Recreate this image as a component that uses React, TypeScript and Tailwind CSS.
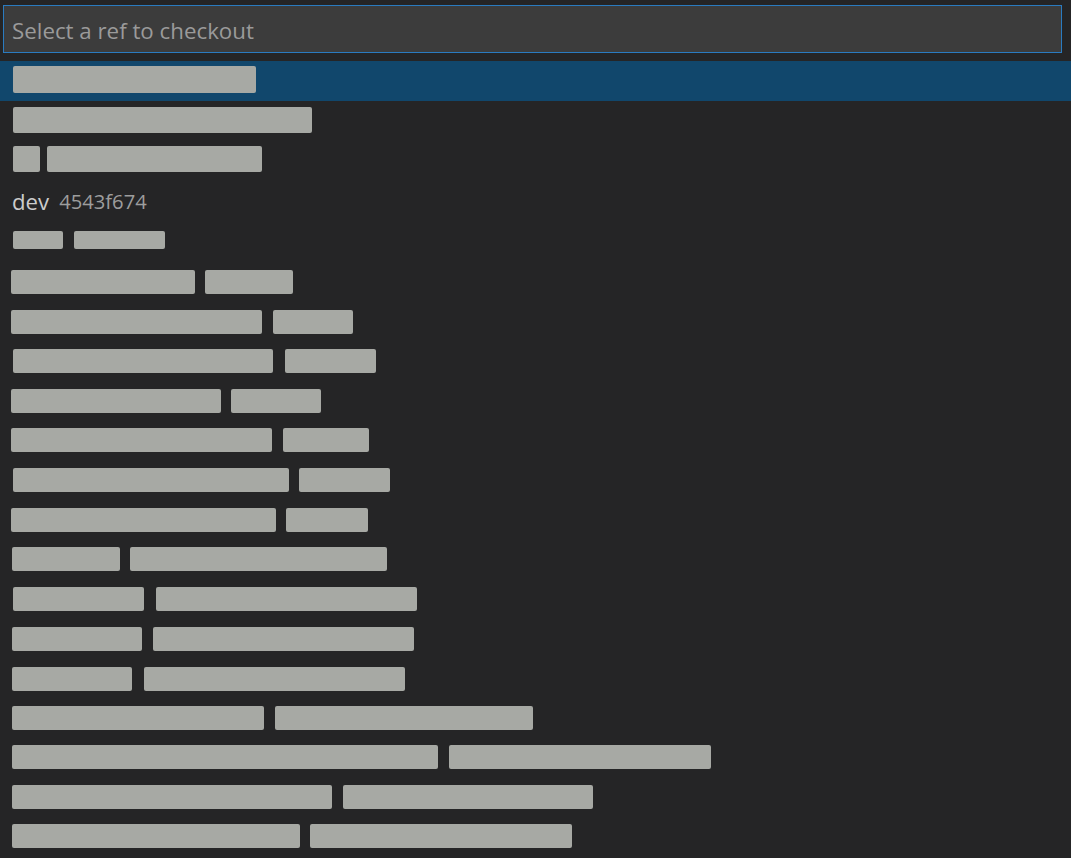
import React from "react";

type Bar = [number, number];
type Row = { top: number; h: number; bars: Bar[] };

const rows: Row[] = [
  { top: 5, h: 27, bars: [[13, 256]] },
  { top: 6.4, h: 26, bars: [[13, 312]] },
  { top: 5.8, h: 26, bars: [[13, 40], [47, 262]] },
  { top: 0, h: 0, bars: [] },
  { top: 11.6, h: 18, bars: [[13, 63], [74, 165]] },
  { top: 11, h: 24, bars: [[11, 195], [205, 293]] },
  { top: 11.4, h: 24, bars: [[11, 262], [273, 353]] },
  { top: 10.8, h: 24, bars: [[13, 273], [285, 376]] },
  { top: 11.2, h: 24, bars: [[11, 221], [231, 321]] },
  { top: 10.6, h: 24, bars: [[11, 272], [283, 369]] },
  { top: 11, h: 24, bars: [[13, 289], [299, 390]] },
  { top: 11.4, h: 24, bars: [[11, 276], [286, 368]] },
  { top: 10.8, h: 24, bars: [[12, 120], [130, 387]] },
  { top: 11.2, h: 24, bars: [[13, 144], [156, 417]] },
  { top: 11.6, h: 24, bars: [[12, 142], [153, 414]] },
  { top: 12, h: 24, bars: [[12, 132], [144, 405]] },
  { top: 11.4, h: 24, bars: [[12, 264], [275, 533]] },
  { top: 10.8, h: 24, bars: [[12, 438], [449, 711]] },
  { top: 11.2, h: 24, bars: [[12, 332], [343, 593]] },
  { top: 10.6, h: 24, bars: [[12, 300], [310, 572]] },
];

function Bars({ row }: { row: Row }) {
  let x = 0;
  return (
    <div className="flex items-start">
      {row.bars.map(([a, b], i) => {
        const ml = a - x;
        x = b;
        return (
          <div
            key={i}
            className="rounded-[2px] bg-[#a7a9a4]"
            style={{ marginLeft: ml, width: b - a, height: row.h, marginTop: row.top }}
          />
        );
      })}
    </div>
  );
}

export default function App() {
  return (
    <div
      className="w-[1071px] h-[858px] overflow-hidden bg-[#252526]"
      style={{ fontFamily: '"Open Sans", "Noto Sans", sans-serif' }}
    >
      <div className="pt-[5px] pl-[3px] pr-[9px] pb-[8px]">
        <div className="h-[48px] border border-[#2a7bc0] bg-[#3c3c3c] flex items-center pl-[8px] pt-[4px]">
          <span className="text-[22.3px] text-[#9a9a9a]">Select a ref to checkout</span>
        </div>
      </div>
      <div className="flex flex-col">
        {rows.map((row, i) => (
          <div
            key={i}
            className={
              "h-[39.6px] shrink-0 " + (i === 0 ? "bg-[#11476c]" : "")
            }
          >
            {i === 3 ? (
              <div className="h-full flex items-center pl-[12px] pt-[4px] gap-[10px]">
                <span className="text-[22.2px] text-[#cccccc]">dev</span>
                <span className="text-[20.2px] text-[#9d9d9d]">4543f674</span>
              </div>
            ) : (
              <Bars row={row} />
            )}
          </div>
        ))}
      </div>
    </div>
  );
}
